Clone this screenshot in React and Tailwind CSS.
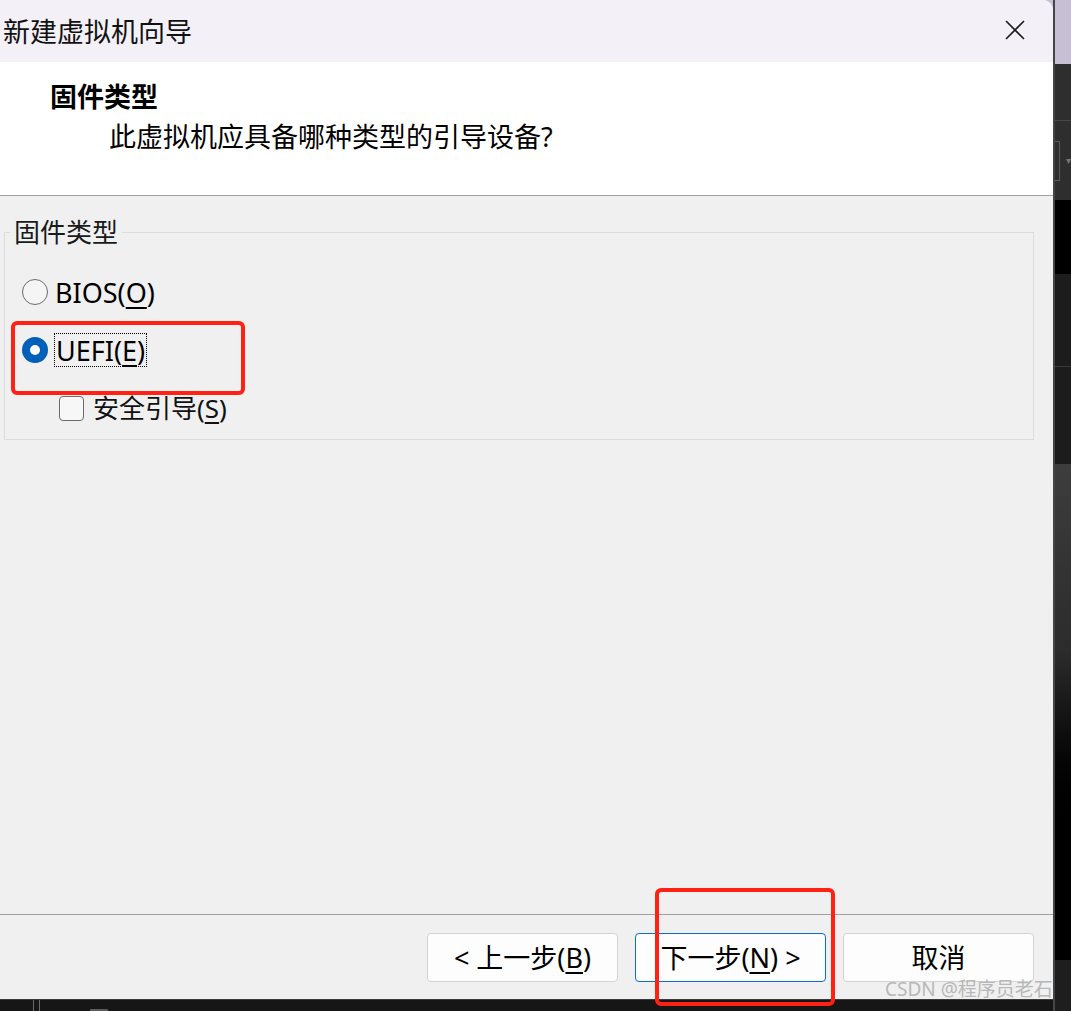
import React from "react";

const FONT = "font-['Noto_Sans','Noto_Sans_CJK_SC',sans-serif]";

function Radio({ checked }) {
  if (checked) {
    return (
      <span className="flex h-[26px] w-[26px] shrink-0 items-center justify-center rounded-full bg-[#005fb8]">
        <span className="h-[10px] w-[10px] rounded-full bg-white" />
      </span>
    );
  }
  return (
    <span className="h-[26px] w-[26px] shrink-0 rounded-full border-[1.5px] border-[#6b6b6b] bg-[#f5f5f5]" />
  );
}

function Button({ children, primary }) {
  return (
    <button
      className={
        primary
          ? "flex h-[49px] w-[191px] items-center justify-center rounded-[4px] border border-[#0a6fd0] bg-[#fdfdfd] text-[27px] leading-none text-black"
          : "flex h-[49px] w-[191px] items-center justify-center rounded-[4px] border border-[#d3d3d3] bg-[#fdfdfd] text-[27px] leading-none text-black"
      }
    >
      {children}
    </button>
  );
}

export default function App() {
  return (
    <div className={`relative flex h-[1011px] w-[1071px] overflow-hidden bg-black ${FONT}`}>
      {/* left column: dialog + bottom bar */}
      <div className="flex w-[1053px] flex-col">
        <div className="bg-[#c7bfd3]">
          <div className="flex h-[999px] flex-col overflow-hidden rounded-tr-[10px] bg-[#f0f0f0]">
            {/* title bar */}
            <div className="flex h-[62px] shrink-0 items-center justify-between bg-[#f3f0f7] pl-[3px] pr-[28px]">
              <span className="text-[27px] leading-none text-[#111]">新建虚拟机向导</span>
              <svg width="20" height="20" viewBox="0 0 20 20" className="mt-[-2px]">
                <path d="M1 1 L19 19 M19 1 L1 19" stroke="#1b1b1b" strokeWidth="1.6" fill="none" />
              </svg>
            </div>
            {/* header */}
            <div className="flex h-[134px] shrink-0 flex-col border-b border-[#a0a0a0] bg-white pt-[19px]">
              <div className="pl-[50px] text-[27px] font-bold leading-[32px] text-black">固件类型</div>
              <div className="mt-[8px] pl-[109px] text-[27px] leading-[32px] text-black">此虚拟机应具备哪种类型的引导设备?</div>
            </div>
            {/* body */}
            <div className="flex-1 pl-[4px] pr-[19px] pt-[20px]">
              <fieldset className="border border-[#dcdcdc] pb-[11px] pl-[5px]">
                <legend className="px-[4px] text-[26px] leading-[32px] text-[#1a1a1a]">固件类型</legend>
                <div className="flex flex-col gap-[18px] pt-[24px] pl-[12px]">
                  <div className="flex h-[40px] items-center gap-[7px]">
                    <Radio />
                    <span className="text-[27px] leading-none text-black">
                      BIOS(<span className="underline underline-offset-[4px]">O</span>)
                    </span>
                  </div>
                  <div className="flex h-[40px] items-center gap-[6px]">
                    <Radio checked />
                    <span className="flex h-[34px] items-center border border-dotted border-black px-[1px] text-[27px] leading-none text-black">
                      UEFI(<span className="underline underline-offset-[4px]">E</span>)
                    </span>
                  </div>
                  <div className="flex h-[40px] items-center gap-[9px] pl-[37px]">
                    <span className="h-[25px] w-[25px] shrink-0 rounded-[4px] border border-[#6b6b6b] bg-[#f7f7f7]" />
                    <span className="text-[26px] leading-none text-[#111]">
                      安全引导(<span className="underline underline-offset-[4px]">S</span>)
                    </span>
                  </div>
                </div>
              </fieldset>
            </div>
            {/* footer */}
            <div className="flex h-[85px] shrink-0 justify-end gap-[17px] border-t border-[#a0a0a0] pr-[19px] pt-[18px]">
              <Button>
                &lt; 上一步(<span className="underline underline-offset-[4px]">B</span>)
              </Button>
              <Button primary>
                下一步(<span className="underline underline-offset-[4px]">N</span>) &gt;
              </Button>
              <Button>取消</Button>
            </div>
          </div>
        </div>
        {/* bottom taskbar-like strip */}
        <div className="flex flex-1 border-t border-[#3a3a3a] bg-[#161616]">
          <div className="ml-[33px] h-full w-[1px] bg-[#6a6a6a]" />
          <div className="ml-[5px] h-full w-[1px] bg-[#6a6a6a]" />
          <div className="ml-[50px] mt-[9px] h-[3px] w-[18px] bg-[#5a5a5a]" />
        </div>
      </div>

      {/* right background strip */}
      <div className="flex flex-1 flex-col border-l-2 border-[#454545]">
        <div className="h-[64px] bg-[#c7bfd3]" />
        <div className="h-[56px] bg-[#2e2e2e]" />
        <div className="flex h-[80px] items-center border-t border-[#474747] bg-[#2e2e2e]">
          <div className="h-[40px] w-[5px] border border-l-0 border-[#5a5a5a]" />
          <span className="ml-[6px] text-[10px] text-[#777]">▾</span>
        </div>
        <div className="h-[74px] bg-black" />
        <div className="h-[93px] border-b border-[#3a3a3a] bg-[#1c1c1c]" />
        <div className="h-[97px] bg-[#1c1c1c]" />
        <div className="h-[374px] bg-gradient-to-b from-[#3d3d3d] via-[#2c2c2c] to-black" />
        <div className="h-[122px] bg-black" />
        <div className="flex-1 bg-[#1e1e1e]" />
      </div>

      {/* annotation overlays */}
      <div className="pointer-events-none absolute left-[11px] top-[321px] h-[74px] w-[234px] rounded-[6px] border-[4px] border-[#ff2214]" />
      <div className="pointer-events-none absolute left-[655px] top-[888px] h-[118px] w-[180px] rounded-[6px] border-[4px] border-[#ff2214]" />
      <div className="pointer-events-none absolute left-[885px] top-[978px] text-[19px] leading-[22px] text-[#b8b8b8]">
        CSDN @程序员老石
      </div>
    </div>
  );
}
